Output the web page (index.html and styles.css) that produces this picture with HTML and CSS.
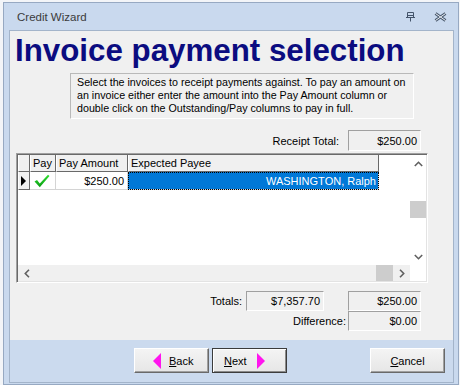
FILE: index.html
```html
<!DOCTYPE html>
<html lang="en">
<head>
  <meta charset="UTF-8">
  <title>Credit Wizard</title>
  <link rel="stylesheet" href="styles.css">
</head>
<body>

  <div class="window">
    <div class="titlebar">
      <span class="caption">Credit Wizard</span>
      <svg class="tb-pin" width="9" height="10" viewBox="0 0 9 10">
        <path d="M1.5 0.5h6v5h-6z M1.5 3.5h6 M0 5.5h9 M4.5 5.5v4" stroke="#44546a" fill="none"/>
      </svg>
      <svg class="tb-close" width="13" height="10" viewBox="0 0 13 10">
        <path d="M1.5 1.5l10 7M11.5 1.5l-10 7" stroke="#4d5d72" stroke-width="3"/>
        <path d="M1.5 1.5l10 7M11.5 1.5l-10 7" stroke="#eef3f9" stroke-width="1"/>
      </svg>
    </div>

    <div class="client">
      <div class="panel">
        <h1 class="heading">Invoice payment selection</h1>

        <div class="info">
          Select the invoices to receipt payments against. To pay an amount on<br>
          an invoice either enter the amount into the Pay Amount column or<br>
          double click on the Outstanding/Pay columns to pay in full.
        </div>

        <div class="field-row receipt">
          <span class="label">Receipt Total:</span>
          <div class="value">$250.00</div>
        </div>

        <!-- invoice grid -->
        <div class="grid">
          <div class="grid-main">
            <div class="grid-body">
              <div class="grid-header">
                <div class="hcell col-sel"></div>
                <div class="hcell col-pay">Pay</div>
                <div class="hcell col-amt">Pay Amount</div>
                <div class="hcell col-payee">Expected Payee</div>
              </div>
              <div class="grid-row">
                <div class="cell col-sel sel-cell">
                  <svg width="5" height="10" viewBox="0 0 5 10"><path d="M0 0L5 5L0 10z" fill="#000"/></svg>
                </div>
                <div class="cell col-pay check-cell">
                  <svg width="16" height="14" viewBox="0 0 16 14">
                    <defs>
                      <linearGradient id="chk" x1="0" y1="0" x2="0" y2="1">
                        <stop offset="0" stop-color="#2ee02e"/>
                        <stop offset="1" stop-color="#0a9a14"/>
                      </linearGradient>
                    </defs>
                    <path d="M0.5 7.5L3 6L5.8 9.5L14 0.8L15.5 2L5.8 13.2z" fill="url(#chk)"/>
                  </svg>
                </div>
                <div class="cell col-amt num">$250.00</div>
                <div class="cell col-payee selected">WASHINGTON, Ralph</div>
              </div>
            </div>
            <div class="vscroll">
              <div class="sbtn">
                <svg width="9" height="6" viewBox="0 0 9 6"><path d="M0.8 5L4.5 1.3L8.2 5" stroke="#606060" stroke-width="1.6" fill="none"/></svg>
              </div>
              <div class="vtrack"><div class="vthumb"></div></div>
              <div class="sbtn">
                <svg width="9" height="6" viewBox="0 0 9 6"><path d="M0.8 1L4.5 4.7L8.2 1" stroke="#606060" stroke-width="1.6" fill="none"/></svg>
              </div>
            </div>
          </div>
          <div class="hscroll-row">
            <div class="hscroll">
              <div class="sbtn">
                <svg width="6" height="9" viewBox="0 0 6 9"><path d="M5 0.8L1.3 4.5L5 8.2" stroke="#606060" stroke-width="1.6" fill="none"/></svg>
              </div>
              <div class="htrack"><div class="hthumb"></div></div>
              <div class="sbtn">
                <svg width="6" height="9" viewBox="0 0 6 9"><path d="M1 0.8L4.7 4.5L1 8.2" stroke="#606060" stroke-width="1.6" fill="none"/></svg>
              </div>
            </div>
            <div class="corner"></div>
          </div>
        </div>

        <div class="totals">
          <div class="field-row">
            <span class="label">Totals:</span>
            <div class="value wide">$7,357.70</div>
            <div class="value spaced">$250.00</div>
          </div>
          <div class="field-row">
            <span class="label">Difference:</span>
            <div class="value">$0.00</div>
          </div>
        </div>
      </div>

      <div class="buttons">
        <button class="btn back">
          <svg width="8" height="16" viewBox="0 0 8 16"><path d="M8 0L0 8L8 16z" fill="#ff14ee"/></svg>
          <span><u>B</u>ack</span>
        </button>
        <button class="btn next default">
          <span><u>N</u>ext</span>
          <svg width="8" height="16" viewBox="0 0 8 16"><path d="M0 0L8 8L0 16z" fill="#ff14ee"/></svg>
        </button>
        <button class="btn cancel"><u>C</u>ancel</button>
      </div>
    </div>
  </div>

</body>
</html>
```

FILE: styles.css
```css
* {
  box-sizing: border-box;
  margin: 0;
  padding: 0;
}

body {
  font-family: "Liberation Sans", Arial, sans-serif;
  font-size: 11px;
  color: #000;
  background: #f3f5f8;
  padding: 2px 0 0 3px;
}

.window {
  width: 456px;
  height: 383px;
  border: 1px solid #97a9c2;
  background: #c9d9ee;
  display: flex;
  flex-direction: column;
}

/* Title bar */
.titlebar {
  height: 27px;
  flex: none;
  display: flex;
  align-items: center;
  padding: 1px 11px 0 13px;
}

.caption {
  flex: 1;
  font-size: 11.5px;
  color: #3b3b3b;
}

.tb-pin {
  margin-right: 19px;
}

/* Client area */
.client {
  height: 353px;
  margin: 0 4px 1px 5px;
  border: 1px solid #a3b4ca;
  display: flex;
  flex-direction: column;
}

.panel {
  height: 309px;
  flex: none;
  background: #f0f0f0;
}

.heading {
  margin-top: 2px;
  padding-left: 5px;
  font-family: "Liberation Sans", Arial, sans-serif;
  font-size: 31.3px;
  line-height: 36px;
  font-weight: bold;
  color: #0b0c80;
  white-space: nowrap;
}

.info {
  margin: 4px 0 0 60px;
  width: 344px;
  padding: 2px 0 3px 6px;
  font-size: 10.7px;
  line-height: 13px;
  white-space: nowrap;
  border: 1px solid;
  border-color: #b9b9b9 #ffffff #ffffff #b9b9b9;
}

/* Label + value boxes */
.field-row {
  display: flex;
  justify-content: flex-end;
  align-items: center;
  padding-right: 32px;
  height: 20px;
}

.field-row .label {
  margin-right: 4px;
}

.receipt {
  margin-top: 11px;
  height: 21px;
}

.receipt .label {
  margin-right: 9px;
}

.value {
  width: 73px;
  height: 100%;
  display: flex;
  align-items: center;
  justify-content: flex-end;
  padding-right: 3px;
  border: 1px solid;
  border-color: #a0a0a0 #ffffff #ffffff #a0a0a0;
}

.value.wide {
  width: 78px;
}

.value.spaced {
  margin-left: 24px;
}

/* Grid */
.grid {
  margin: 2px 0 0 6px;
  width: 412px;
  height: 130px;
  border: 1px solid;
  border-color: #a0a0a0 #ffffff #ffffff #a0a0a0;
  box-shadow: inset 1px 1px 0 #696969, inset -1px -1px 0 #e3e3e3;
  padding: 1px;
  display: flex;
  flex-direction: column;
  background: #fff;
}

.grid-main {
  flex: 1;
  display: flex;
}

.grid-body {
  flex: 1;
}

.grid-header,
.grid-row {
  display: flex;
}

.grid-header {
  height: 17px;
}

.grid-row {
  height: 18px;
}

.hcell {
  height: 17px;
  padding: 2px 0 0 2px;
  background: #f0f0f0;
  border-right: 1px solid #696969;
  border-bottom: 1px solid #696969;
  border-left: 1px solid #fff;
  white-space: nowrap;
}

.col-sel { width: 12px; }
.col-pay { width: 26px; }
.col-amt { width: 72px; }
.col-payee { width: 251px; }

.cell {
  height: 18px;
  border-right: 1px solid #d4d4d4;
  border-bottom: 1px solid #d4d4d4;
  display: flex;
  align-items: center;
}

.sel-cell {
  background: #f0f0f0;
  border-left: 1px solid #fff;
  border-right: 1px solid #696969;
  border-bottom: 1px solid #696969;
  padding-left: 2px;
}

.check-cell {
  justify-content: center;
  padding-right: 2px;
}

.num {
  justify-content: flex-end;
  padding-right: 3px;
}

.selected {
  justify-content: flex-end;
  padding-right: 2px;
  background: #0078d7;
  color: #fff;
  outline: 1px dotted #000;
  outline-offset: -1px;
}

/* Scrollbars */
.vscroll {
  width: 16px;
  display: flex;
  flex-direction: column;
  background: #fff;
}

.sbtn {
  width: 16px;
  height: 17px;
  display: flex;
  align-items: center;
  justify-content: center;
  flex: none;
}

.vtrack {
  flex: 1;
}

.vthumb {
  margin-top: 29px;
  height: 17px;
  background: #cdcdcd;
}

.hscroll-row {
  height: 16px;
  display: flex;
}

.hscroll {
  flex: 1;
  display: flex;
  background: #f0f0f0;
}

.hscroll .sbtn {
  width: 17px;
  height: 16px;
}

.htrack {
  flex: 1;
  display: flex;
  justify-content: flex-end;
}

.hthumb {
  width: 17px;
  background: #cdcdcd;
}

.corner {
  width: 16px;
  background: #fff;
}

.totals {
  margin-top: 8px;
}

.totals .field-row:last-child .label {
  margin-right: 2px;
}

/* Button strip */
.buttons {
  flex: 1;
  display: flex;
  align-items: flex-start;
  padding: 8px 8px 0 124px;
  background: #cbdaee;
}

.btn {
  width: 75px;
  height: 25px;
  font-family: "Liberation Sans", Arial, sans-serif;
  font-size: 11px;
  color: #000;
  background: linear-gradient(#f4f4f4, #e6e6e6);
  border: 1px solid;
  border-color: #ffffff #696969 #696969 #ffffff;
  box-shadow: inset -1px -1px 0 #a0a0a0;
  display: flex;
  align-items: center;
  cursor: pointer;
}

.btn.back {
  padding-left: 18px;
  gap: 8px;
}

.btn.next {
  margin-left: 3px;
  padding-left: 11px;
  gap: 10px;
}

.btn.default {
  border-color: #3c3c3c;
  box-shadow: inset 1px 1px 0 #fff, inset -1px -1px 0 #8a8a8a;
}

.btn.cancel {
  margin-left: auto;
  justify-content: center;
}
```
